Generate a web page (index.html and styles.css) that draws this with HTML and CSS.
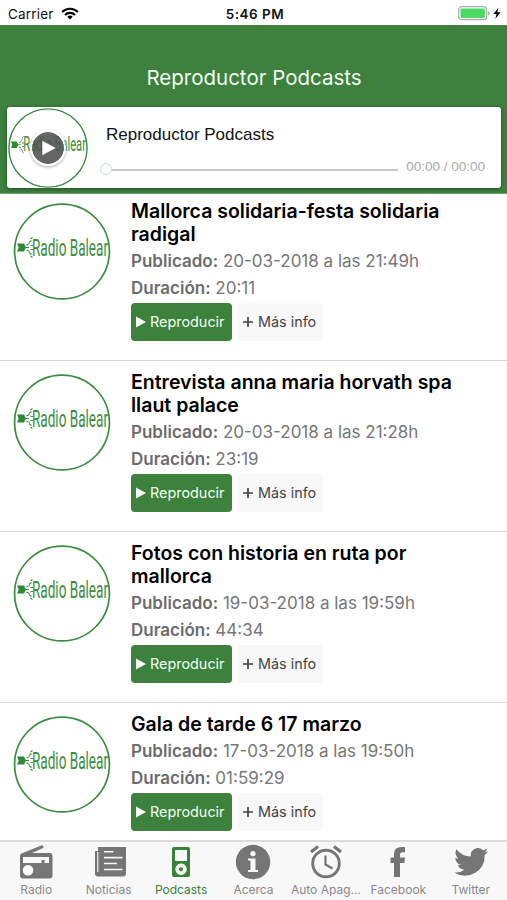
FILE: index.html
```
<!DOCTYPE html>
<html lang="es">
<head>
    <meta charset="UTF-8">
    <meta name="viewport" content="width=device-width, initial-scale=1.0">
    <title>Reproductor Podcasts</title>
    <link rel="stylesheet" href="styles.css">
</head>
<body>
    <!-- shared drawings -->
    <svg class="defs" width="0" height="0">
        <symbol id="logo" viewBox="0 0 97 97">
            <circle cx="48.500" cy="48.500" r="47.400" fill="#fff" stroke="#3c8c40" stroke-width="1.700"/>
            <path d="M3.500 40.500h7l2 4-2 4h-7l1.700-4z" fill="#2c8a35"/>
            <path d="M12 44.500h3.500M13 42l3-1.500M13 47l3 1.500M15.500 39.500l2.500-2M15.500 49.500l2.500 2M17 36l2-1.500M17 53l2 1.500M17 42.500h2.500M17 46.500h2.500" stroke="#3c8c40" stroke-width="1.100" fill="none"/>
            <text x="18.500" y="52.500" font-size="23.500" textLength="76" lengthAdjust="spacingAndGlyphs" class="logo-text">Radio Balear</text>
        </symbol>
        <symbol id="play" viewBox="0 0 10 12">
            <path d="M0 .5v11L10 6z" fill="#fff"/>
        </symbol>
        <symbol id="plus" viewBox="0 0 12 12">
            <path d="M6 1v10M1 6h10" stroke="#444" stroke-width="1.700"/>
        </symbol>
    </svg>

    <div class="status-bar">
        <div class="carrier">
            <span>Carrier</span>
            <svg width="18" height="13" viewBox="0 0 18 13">
                <path d="M1.200 5a11 11 0 0 1 15.600 0M4 8a7 7 0 0 1 10 0" fill="none" stroke="#000" stroke-width="2.200"/>
                <path d="M9 12.500L6.300 9.800a3.800 3.800 0 0 1 5.400 0z"/>
            </svg>
        </div>
        <div class="clock">5:46 PM</div>
        <div class="battery">
            <svg width="44" height="15" viewBox="0 0 44 15">
                <rect x=".7" y=".7" width="28" height="13" rx="3" fill="#fff" stroke="#a9a9a9" stroke-width="1.200"/>
                <rect x="2.500" y="2.500" width="24.400" height="9.400" rx="1" fill="#4cd964"/>
                <path d="M30 5v4.500q1.600-.8 1.600-2.250T30 5z" fill="#a9a9a9"/>
                <path d="M40.500 1.500L35.500 8h3l-1.200 5 5.200-6.800h-3.200z"/>
            </svg>
        </div>
    </div>

    <header>
        <h1>Reproductor Podcasts</h1>
        <div class="player">
            <div class="player-cover">
                <svg class="cover-logo"><use href="#logo"/></svg>
                <button class="player-btn"><svg width="14" height="16"><use href="#play"/></svg></button>
            </div>
            <div class="player-body">
                <div class="player-title"><span>Reproductor Podcasts</span></div>
                <div class="player-controls">
                    <div class="knob"></div>
                    <div class="track"></div>
                    <div class="time">00:00 / 00:00</div>
                </div>
            </div>
        </div>
    </header>

    <main>
        <div class="podcast">
            <svg class="podcast-logo"><use href="#logo"/></svg>
            <div class="podcast-info">
                <h2>Mallorca solidaria-festa solidaria<br>radigal</h2>
                <p><b>Publicado:</b> 20-03-2018 a las 21:49h</p>
                <p><b>Duración:</b> 20:11</p>
                <div class="buttons">
                    <button class="play-btn"><svg width="10" height="12"><use href="#play"/></svg>Reproducir</button>
                    <button class="info-btn"><svg width="12" height="12"><use href="#plus"/></svg>Más info</button>
                </div>
            </div>
        </div>
        <div class="podcast">
            <svg class="podcast-logo"><use href="#logo"/></svg>
            <div class="podcast-info">
                <h2>Entrevista anna maria horvath spa<br>llaut palace</h2>
                <p><b>Publicado:</b> 20-03-2018 a las 21:28h</p>
                <p><b>Duración:</b> 23:19</p>
                <div class="buttons">
                    <button class="play-btn"><svg width="10" height="12"><use href="#play"/></svg>Reproducir</button>
                    <button class="info-btn"><svg width="12" height="12"><use href="#plus"/></svg>Más info</button>
                </div>
            </div>
        </div>
        <div class="podcast">
            <svg class="podcast-logo"><use href="#logo"/></svg>
            <div class="podcast-info">
                <h2>Fotos con historia en ruta por<br>mallorca</h2>
                <p><b>Publicado:</b> 19-03-2018 a las 19:59h</p>
                <p><b>Duración:</b> 44:34</p>
                <div class="buttons">
                    <button class="play-btn"><svg width="10" height="12"><use href="#play"/></svg>Reproducir</button>
                    <button class="info-btn"><svg width="12" height="12"><use href="#plus"/></svg>Más info</button>
                </div>
            </div>
        </div>
        <div class="podcast">
            <svg class="podcast-logo"><use href="#logo"/></svg>
            <div class="podcast-info">
                <h2>Gala de tarde 6 17 marzo</h2>
                <p><b>Publicado:</b> 17-03-2018 a las 19:50h</p>
                <p><b>Duración:</b> 01:59:29</p>
                <div class="buttons">
                    <button class="play-btn"><svg width="10" height="12"><use href="#play"/></svg>Reproducir</button>
                    <button class="info-btn"><svg width="12" height="12"><use href="#plus"/></svg>Más info</button>
                </div>
            </div>
        </div>
    </main>

    <nav class="tabs">
        <a class="tab">
            <svg width="36" height="36" viewBox="0 0 36 36">
                <path fill-rule="evenodd" d="M3.500 9.500L24.500 1l1.200 2.800L14 9h17.500q3 0 3 3v19.500q0 3-3 3H5q-3 0-3-3V12q0-2 1.500-2.500zM5 13v6h18.500v-3h3v3H31v-6zM10 21a5.300 5.300 0 1 0 .1 0z"/>
            </svg>
            <span>Radio</span>
        </a>
        <a class="tab">
            <svg width="36" height="36" viewBox="0 0 36 36">
                <path d="M7 3h28v26.500q0 3-3 3H7q-3 0-3-3V7h3z"/>
                <path d="M6.800 8v20" stroke="#f8f8f8" stroke-width="1.100"/>
                <path d="M13 7.700h9.500M13 13.600h18.500M13 19.500h13M13 25.500h18.500" stroke="#f8f8f8" stroke-width="1.600"/>
            </svg>
            <span>Noticias</span>
        </a>
        <a class="tab active">
            <svg width="36" height="36" viewBox="0 0 36 36">
                <path fill-rule="evenodd" d="M11 3h14q2 0 2 2v26q0 2-2 2H11q-2 0-2-2V5q0-2 2-2zM12 6v11h12V6zM18 19.500a5.700 5.700 0 1 0 .1 0zM18 23.200a2 2 0 1 1-.1 0z"/>
            </svg>
            <span>Podcasts</span>
        </a>
        <a class="tab">
            <svg width="36" height="36" viewBox="0 0 36 36">
                <path fill-rule="evenodd" d="M18 .8a17.200 17.200 0 1 0 .1 0zM18 7a2.700 2.700 0 1 1-.1 0zM13 14.500h7.500V26H23v2H13v-2h2.500v-9.500H13z"/>
            </svg>
            <span>Acerca</span>
        </a>
        <a class="tab">
            <svg width="36" height="36" viewBox="0 0 36 36">
                <g fill="none" stroke="#757575">
                    <circle cx="18" cy="19.500" r="13.300" stroke-width="2.900"/>
                    <path d="M17.500 11.500v9l7 4" stroke-width="2.200"/>
                    <path d="M3 8l7-5.500M26 2.500L33 8" stroke-width="3.200"/>
                </g>
            </svg>
            <span>Auto Apag...</span>
        </a>
        <a class="tab">
            <svg width="36" height="36" viewBox="0 0 36 36">
                <path d="M14 33V19H10.500v-5.500H14V10q0-7 7.500-7H25v5.300h-2.500q-2.500 0-2.500 2.200v3h5l-.6 5.500H20v14z"/>
            </svg>
            <span>Facebook</span>
        </a>
        <a class="tab">
            <svg width="36" height="36" viewBox="0 0 24 24">
                <path d="M23.500 4.900a9 9 0 0 1-2.600.7 4.700 4.700 0 0 0 2-2.600 9 9 0 0 1-3 1.200 4.700 4.700 0 0 0-8 4.200A13 13 0 0 1 2.300 3.500a4.700 4.700 0 0 0 1.400 6.200 4.600 4.600 0 0 1-2.100-.6 4.700 4.700 0 0 0 3.700 4.700 4.700 4.700 0 0 1-2.100.1 4.700 4.700 0 0 0 4.400 3.200A9.300 9.300 0 0 1 .8 19a13.200 13.200 0 0 0 20.300-11.700 9.500 9.500 0 0 0 2.400-2.400z"/>
            </svg>
            <span>Twitter</span>
        </a>
    </nav>
</body>
</html>
```
FILE: styles.css
```
* {
    box-sizing: border-box;
}

body {
    font-family: 'Inter', 'Roboto', sans-serif;
    background-color: #fff;
    margin: 0;
    height: 900px;
    display: flex;
    flex-direction: column;
    overflow: hidden;
}

svg {
    display: block;
    flex: none;
}

.defs {
    position: absolute;
}

button {
    font-family: inherit;
    border: none;
    margin: 0;
    padding: 0;
}

.status-bar {
    flex: none;
    display: grid;
    grid-template-columns: 1fr auto 1fr;
    align-items: center;
    height: 25px;
    padding: 2px 5px 0 8px;
    font-size: 13px;
    color: #111;
}

.carrier {
    display: flex;
    align-items: center;
    gap: 7px;
    font-size: 13.5px;
    letter-spacing: 0.2px;
}

.clock {
    font-weight: 600;
    font-size: 13.5px;
    letter-spacing: 0.5px;
}

.battery {
    justify-self: end;
}

header {
    flex: none;
    height: 169px;
    padding: 34px 6px 0 7px;
    background-color: #3e813f;
    border-bottom: 1px solid #6fa570;
}

h1 {
    margin: 0 0 11px;
    font-size: 20.5px;
    font-weight: 400;
    line-height: 37px;
    text-align: center;
    color: #f2fff0;
}

.player {
    display: flex;
    height: 81px;
    background-color: #fff;
    border-radius: 3px;
    box-shadow: 0 1px 4px rgba(0, 0, 0, 0.4);
}

.player-cover {
    display: grid;
    place-items: center;
    width: 81px;
    height: 81px;
}

.player-cover > * {
    grid-area: 1 / 1;
}

.cover-logo {
    width: 80px;
    height: 80px;
}

.player-btn {
    display: flex;
    align-items: center;
    justify-content: center;
    width: 36px;
    height: 36px;
    padding-left: 3px;
    border: 2px solid rgba(255, 255, 255, 0.85);
    border-radius: 50%;
    background-color: rgba(80, 80, 80, 0.88);
    background-clip: padding-box;
    box-shadow: 0 1px 3px rgba(0, 0, 0, 0.35);
}

.player-body {
    flex: 1;
    padding: 18px 16px 0 12px;
}

.player-title {
    padding-left: 6px;
    font-family: 'Liberation Sans', sans-serif;
    font-size: 17px;
    line-height: 20px;
    color: #111;
}

.player-controls {
    display: flex;
    align-items: center;
    margin-top: 13px;
    height: 20px;
}

.knob {
    width: 12px;
    height: 12px;
    margin-top: 2px;
    border: 1.5px solid #bcd8fb;
    border-radius: 50%;
}

.track {
    flex: 1;
    height: 2px;
    margin: 3px 8px 0 0;
    background-color: #c8c8c8;
}

.time {
    font-family: 'Liberation Sans', sans-serif;
    font-size: 13.5px;
    line-height: 16px;
    margin-bottom: 2px;
    color: #aaa;
}

main {
    flex: 1;
    min-height: 0;
    overflow: hidden;
}

.podcast {
    display: flex;
    gap: 20px;
    height: 171px;
    padding: 10px 13px 0;
    border-bottom: 1px solid #d8d8d8;
}

.podcast:first-child {
    height: 167px;
    padding-top: 6px;
}

.podcast-logo {
    width: 98px;
    height: 97px;
    margin-top: 3px;
}

.logo-text {
    font-family: 'Roboto', sans-serif;
    fill: #3c8c40;
}

h2 {
    margin: 0 0 2px;
    font-size: 19.5px;
    font-weight: 600;
    line-height: 23px;
    color: #000;
    white-space: nowrap;
}

p {
    margin: 0;
    font-size: 17px;
    line-height: 27px;
    color: #777;
    white-space: nowrap;
}

p b {
    font-weight: 600;
    color: #6c6c6c;
}

.buttons {
    display: flex;
    gap: 5px;
    padding-top: 1px;
}

.play-btn, .info-btn {
    display: flex;
    align-items: center;
    height: 38px;
    padding-bottom: 1px;
    border-radius: 4px;
    font-size: 14.4px;
    white-space: nowrap;
}

.play-btn {
    gap: 4px;
    width: 101px;
    padding-left: 5px;
    background-color: #3c813c;
    color: #f2fff0;
}

.info-btn {
    gap: 4px;
    width: 86px;
    padding-left: 5px;
    background-color: #f8f8f8;
    color: #444;
}

.tabs {
    flex: none;
    display: grid;
    grid-template-columns: repeat(7, 1fr);
    height: 60px;
    border-top: 2px solid #dcdcdc;
    background-color: #f8f8f8;
}

.tab {
    display: flex;
    flex-direction: column;
    align-items: center;
    padding-top: 2px;
    font-size: 12px;
    line-height: 15px;
    white-space: nowrap;
    color: #888;
}

.tab svg {
    fill: #757575;
}

.tab span {
    margin-top: 2px;
}

.tab.active {
    color: #3c813c;
}

.tab.active svg {
    fill: #37833a;
}
```
